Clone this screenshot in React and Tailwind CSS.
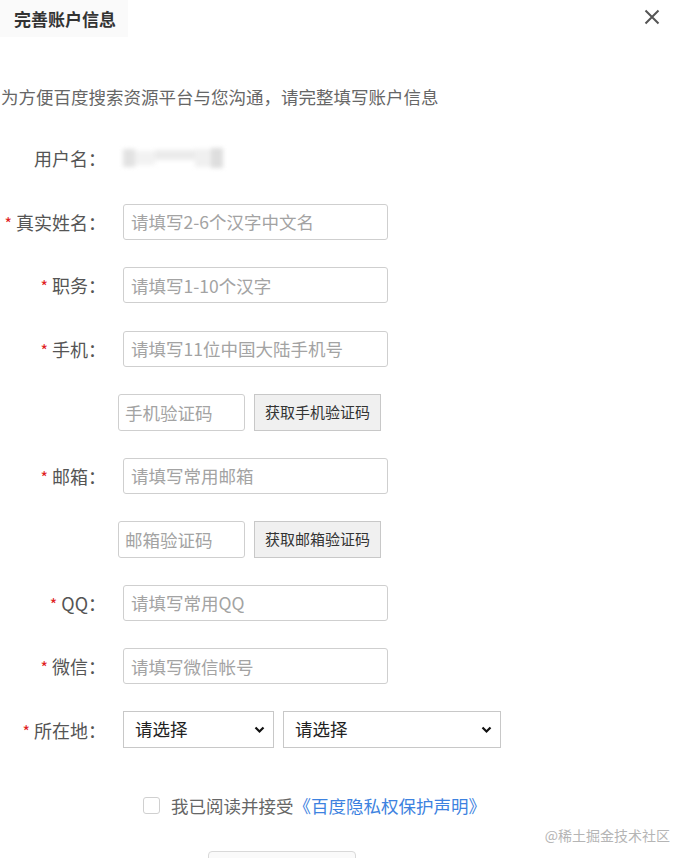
import React from "react";

const font = { fontFamily: '"Noto Sans CJK SC", "Microsoft YaHei", sans-serif' };

function Label({ text, required }) {
  return (
    <div className="w-[106px] shrink-0 flex items-center justify-end text-[18px] text-[#555] leading-none">
      {required && <span className="text-[#e02020] text-[16px] mr-[4px] mt-[2px]">*</span>}
      <span>{text}：</span>
    </div>
  );
}

function TextInput({ placeholder }) {
  return (
    <input
      className="ml-[17px] w-[265px] h-9 border border-[#cfcfcf] rounded-[3px] px-[7px] text-[17.5px] placeholder:text-[#a3a3a3] outline-none"
      placeholder={placeholder}
      style={font}
    />
  );
}

function Row({ label, required, placeholder }) {
  return (
    <div className="flex items-center h-9">
      <Label text={label} required={required} />
      <TextInput placeholder={placeholder} />
    </div>
  );
}

function CodeRow({ placeholder, button }) {
  return (
    <div className="flex items-center h-9 pl-[118px]">
      <input
        className="w-[127px] h-[37px] border border-[#cfcfcf] rounded-[3px] px-[6px] text-[17.5px] placeholder:text-[#a3a3a3] outline-none"
        placeholder={placeholder}
        style={font}
      />
      <button
        className="ml-[9px] w-[127px] h-[37px] border border-[#c8c8c8] bg-[#f0f0f0] text-[15px] text-[#333]"
        style={font}
      >
        {button}
      </button>
    </div>
  );
}

function Select({ w }) {
  return (
    <div className={`relative h-[37px] border border-[#c8c8c8] bg-white flex items-center ${w}`}>
      <span className="pl-[11px] text-[17.5px] text-[#222]">请选择</span>
      <svg className="absolute right-[8px] top-[14px]" width="11" height="8" viewBox="0 0 11 8">
        <path d="M1.5 1.5 L5.5 5.5 L9.5 1.5" fill="none" stroke="#111" strokeWidth="2.2" />
      </svg>
    </div>
  );
}

export default function App() {
  return (
    <div className="w-[676px] h-[858px] bg-white relative overflow-hidden" style={font}>
      <div className="flex items-start justify-between h-[40px]">
        <div className="pl-[14px] pr-[12px] pt-[7px] pb-[6px] bg-[#fafafa] text-[17px] font-bold text-[#333] leading-[24px]">
          完善账户信息
        </div>
        <svg className="mr-[16px] mt-[9px]" width="16" height="16" viewBox="0 0 16 16">
          <path d="M1.5 1.5 L14.5 14.5 M14.5 1.5 L1.5 14.5" stroke="#555" strokeWidth="2" />
        </svg>
      </div>
      <div className="mt-[46px] pl-[1px] text-[17.5px] text-[#666] leading-[22px]">
        为方便百度搜索资源平台与您沟通，请完整填写账户信息
      </div>
      <div className="mt-[32px] flex flex-col gap-[27.5px]">
        <div className="flex items-center h-9">
          <Label text="用户名" />
          <div className="ml-[17px] relative w-[108px] h-[24px]">
            <div className="absolute inset-0 flex items-center blur-[2px]">
              <div className="w-[12px] h-[18px] bg-[#e2e2e2]" />
              <div className="w-[20px] h-[14px] bg-[#f2f2f2]" />
              <div className="w-[40px] h-[10px] bg-[#ebebeb] -mt-[6px]" />
              <div className="w-[16px] h-[18px] bg-[#f0f0f0]" />
              <div className="w-[12px] h-[20px] bg-[#dedede]" />
            </div>
          </div>
        </div>
        <Row label="真实姓名" required placeholder="请填写2-6个汉字中文名" />
        <Row label="职务" required placeholder="请填写1-10个汉字" />
        <Row label="手机" required placeholder="请填写11位中国大陆手机号" />
        <CodeRow placeholder="手机验证码" button="获取手机验证码" />
        <Row label="邮箱" required placeholder="请填写常用邮箱" />
        <CodeRow placeholder="邮箱验证码" button="获取邮箱验证码" />
        <Row label="QQ" required placeholder="请填写常用QQ" />
        <Row label="微信" required placeholder="请填写微信帐号" />
        <div className="flex items-center h-9">
          <Label text="所在地" required />
          <div className="ml-[17px] flex gap-[9px]">
            <Select w="w-[151px]" />
            <Select w="w-[218px]" />
          </div>
        </div>
      </div>
      <div className="mt-[45px] flex items-center pl-[143px]">
        <span className="w-[17px] h-[17px] border border-[#d0d0d0] rounded-[3px] bg-white" />
        <span className="ml-[11px] text-[17.5px] text-[#666]">我已阅读并接受</span>
        <span className="text-[17.5px] text-[#3d82e0]">《百度隐私权保护声明》</span>
      </div>
      <div className="mt-[32px] ml-[208px] w-[148px] h-[40px] border border-[#d9d9d9] rounded-[4px] bg-[#fafafa]" />
      <div className="absolute right-[6px] bottom-[16px] text-[14px] text-[#b5b5b5] leading-none">
        @稀土掘金技术社区
      </div>
    </div>
  );
}
